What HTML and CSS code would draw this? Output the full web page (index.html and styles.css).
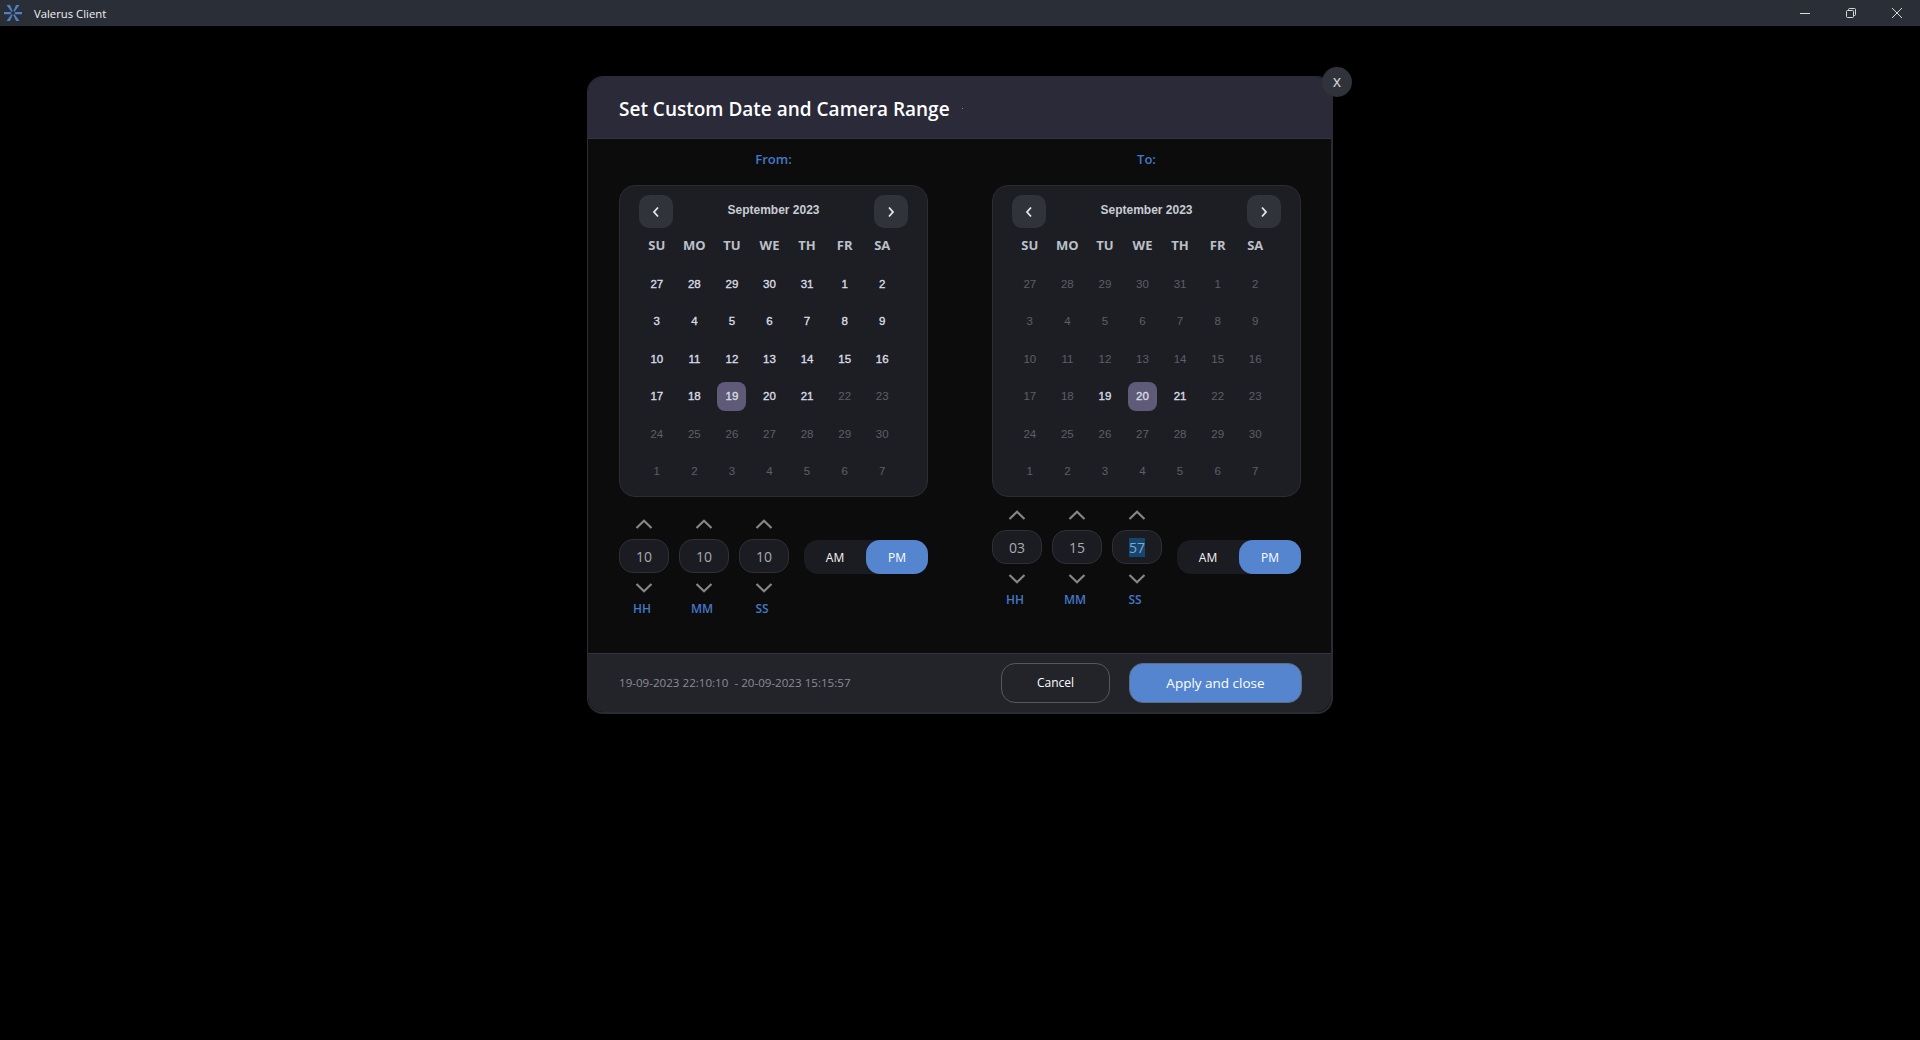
FILE: index.html
```html
<!DOCTYPE html>
<html lang="en">
<head>
  <meta charset="UTF-8" />
  <meta name="viewport" content="width=device-width, initial-scale=1.0" />
  <title>Valerus Client</title>
  <link rel="stylesheet" href="styles.css">
</head>
<body>
  <header class="titlebar">
    <svg class="app-logo" width="18" height="16" viewBox="0 0 18 16" fill="#4f7fc4">
      <path d="M2.5 0 L6 0 L8.6 6 L7.6 7 Z"/>
      <path d="M15.5 0 L12 0 L9.4 6 L10.4 7 Z"/>
      <path d="M0 7 L6.5 7 L7.5 8 L6.5 9.2 L0 9.2 Z"/>
      <path d="M18 7 L11.5 7 L10.5 8 L11.5 9.2 L18 9.2 Z"/>
      <path d="M2.5 16 L6 16 L8.6 10 L7.6 9 Z"/>
      <path d="M15.5 16 L12 16 L9.4 10 L10.4 9 Z"/>
    </svg>
    <span class="app-name">Valerus Client</span>
    <div class="window-btns">
      <svg width="10" height="10" viewBox="0 0 10 10"><path d="M0 5.5H10" stroke="#d8d8d8"/></svg>
      <svg width="10" height="10" viewBox="0 0 10 10" fill="none" stroke="#d8d8d8"><rect x="0.5" y="2.5" width="7" height="7" rx="1"/><path d="M2.5 2.5V1.5a1 1 0 0 1 1-1h5a1 1 0 0 1 1 1v5a1 1 0 0 1-1 1h-1"/></svg>
      <svg width="10" height="10" viewBox="0 0 10 10"><path d="M0 0L10 10M10 0L0 10" stroke="#d8d8d8"/></svg>
    </div>
  </header>

  <main class="stage">
    <section class="modal">
      <button class="close-btn">x</button>
      <div class="modal-header">
        <h1>Set Custom Date and Camera Range</h1>
        <span class="header-dot"></span>
      </div>

      <div class="modal-body">
        <div class="range-col">
          <div class="range-label">From:</div>
          <div class="calendar">
            <div class="cal-head">
              <button class="nav-btn"><svg width="10" height="12" viewBox="0 0 10 12"><path d="M7 1.5L3 6L7 10.5" /></svg></button>
              <span class="cal-month">September 2023</span>
              <button class="nav-btn"><svg width="10" height="12" viewBox="0 0 10 12"><path d="M3 1.5L7 6L3 10.5" /></svg></button>
            </div>
            <div class="cal-grid">
              <span class="dow">SU</span><span class="dow">MO</span><span class="dow">TU</span><span class="dow">WE</span><span class="dow">TH</span><span class="dow">FR</span><span class="dow">SA</span>
              <span class="day">27</span><span class="day">28</span><span class="day">29</span><span class="day">30</span><span class="day">31</span><span class="day">1</span><span class="day">2</span>
              <span class="day">3</span><span class="day">4</span><span class="day">5</span><span class="day">6</span><span class="day">7</span><span class="day">8</span><span class="day">9</span>
              <span class="day">10</span><span class="day">11</span><span class="day">12</span><span class="day">13</span><span class="day">14</span><span class="day">15</span><span class="day">16</span>
              <span class="day">17</span><span class="day">18</span><span class="day selected"><b>19</b></span><span class="day">20</span><span class="day">21</span><span class="day off">22</span><span class="day off">23</span>
              <span class="day off">24</span><span class="day off">25</span><span class="day off">26</span><span class="day off">27</span><span class="day off">28</span><span class="day off">29</span><span class="day off">30</span>
              <span class="day off">1</span><span class="day off">2</span><span class="day off">3</span><span class="day off">4</span><span class="day off">5</span><span class="day off">6</span><span class="day off">7</span>
            </div>
          </div>
          <div class="time-row">
            <div class="stepper">
              <div class="step"><svg class="chev" viewBox="0 0 18 10"><path d="M1.5 9L9 1.8L16.5 9"/></svg><div class="pill">10</div><svg class="chev" viewBox="0 0 18 10"><path d="M1.5 1L9 8.2L16.5 1"/></svg><span class="unit">HH</span></div>
              <div class="step"><svg class="chev" viewBox="0 0 18 10"><path d="M1.5 9L9 1.8L16.5 9"/></svg><div class="pill">10</div><svg class="chev" viewBox="0 0 18 10"><path d="M1.5 1L9 8.2L16.5 1"/></svg><span class="unit">MM</span></div>
              <div class="step"><svg class="chev" viewBox="0 0 18 10"><path d="M1.5 9L9 1.8L16.5 9"/></svg><div class="pill">10</div><svg class="chev" viewBox="0 0 18 10"><path d="M1.5 1L9 8.2L16.5 1"/></svg><span class="unit">SS</span></div>
            </div>
            <div class="ampm"><span>AM</span><span class="active">PM</span></div>
          </div>
        </div>

        <div class="range-col">
          <div class="range-label">To:</div>
          <div class="calendar">
            <div class="cal-head">
              <button class="nav-btn"><svg width="10" height="12" viewBox="0 0 10 12"><path d="M7 1.5L3 6L7 10.5" /></svg></button>
              <span class="cal-month">September 2023</span>
              <button class="nav-btn"><svg width="10" height="12" viewBox="0 0 10 12"><path d="M3 1.5L7 6L3 10.5" /></svg></button>
            </div>
            <div class="cal-grid">
              <span class="dow">SU</span><span class="dow">MO</span><span class="dow">TU</span><span class="dow">WE</span><span class="dow">TH</span><span class="dow">FR</span><span class="dow">SA</span>
              <span class="day off">27</span><span class="day off">28</span><span class="day off">29</span><span class="day off">30</span><span class="day off">31</span><span class="day off">1</span><span class="day off">2</span>
              <span class="day off">3</span><span class="day off">4</span><span class="day off">5</span><span class="day off">6</span><span class="day off">7</span><span class="day off">8</span><span class="day off">9</span>
              <span class="day off">10</span><span class="day off">11</span><span class="day off">12</span><span class="day off">13</span><span class="day off">14</span><span class="day off">15</span><span class="day off">16</span>
              <span class="day off">17</span><span class="day off">18</span><span class="day">19</span><span class="day selected"><b>20</b></span><span class="day">21</span><span class="day off">22</span><span class="day off">23</span>
              <span class="day off">24</span><span class="day off">25</span><span class="day off">26</span><span class="day off">27</span><span class="day off">28</span><span class="day off">29</span><span class="day off">30</span>
              <span class="day off">1</span><span class="day off">2</span><span class="day off">3</span><span class="day off">4</span><span class="day off">5</span><span class="day off">6</span><span class="day off">7</span>
            </div>
          </div>
          <div class="time-row raised">
            <div class="stepper">
              <div class="step"><svg class="chev" viewBox="0 0 18 10"><path d="M1.5 9L9 1.8L16.5 9"/></svg><div class="pill">03</div><svg class="chev" viewBox="0 0 18 10"><path d="M1.5 1L9 8.2L16.5 1"/></svg><span class="unit">HH</span></div>
              <div class="step"><svg class="chev" viewBox="0 0 18 10"><path d="M1.5 9L9 1.8L16.5 9"/></svg><div class="pill">15</div><svg class="chev" viewBox="0 0 18 10"><path d="M1.5 1L9 8.2L16.5 1"/></svg><span class="unit">MM</span></div>
              <div class="step"><svg class="chev" viewBox="0 0 18 10"><path d="M1.5 9L9 1.8L16.5 9"/></svg><div class="pill"><span class="sel-text">57</span></div><svg class="chev" viewBox="0 0 18 10"><path d="M1.5 1L9 8.2L16.5 1"/></svg><span class="unit">SS</span></div>
            </div>
            <div class="ampm"><span>AM</span><span class="active">PM</span></div>
          </div>
        </div>
      </div>

      <div class="modal-footer">
        <span class="range-text">19-09-2023 22:10:10&nbsp; - 20-09-2023 15:15:57</span>
        <button class="btn cancel">Cancel</button>
        <button class="btn apply">Apply and close</button>
      </div>
    </section>
  </main>
</body>
</html>
```

FILE: styles.css
```css
* {
  box-sizing: border-box;
}
html, body {
  height: 100%;
}
body {
  margin: 0;
  background: #000;
  color: #fff;
  font-family: "Open Sans", sans-serif;
  overflow: hidden;
}
button {
  font-family: inherit;
  cursor: pointer;
}

.titlebar {
  height: 26px;
  background: #2a2e37;
  display: flex;
  align-items: center;
  padding-left: 4px;
}
.app-logo {
  flex: none;
}
.app-name {
  margin-left: 12px;
  font-size: 11.3px;
  color: #f2f2f2;
}
.window-btns {
  margin-left: auto;
  display: flex;
  gap: 36px;
  padding-right: 18px;
}

.stage {
  padding: 50px 0 0 587px;
}
.modal {
  position: relative;
  width: 746px;
  height: 638px;
  display: flex;
  flex-direction: column;
  background: #0c0c0d;
  border: 1px solid #2b2c33;
  border-width: 1px 2px 2px 1px;
  border-radius: 16px;
}
.close-btn {
  position: absolute;
  top: -10px;
  right: -21px;
  width: 30px;
  height: 30px;
  padding: 0 0 3px;
  border: 0;
  border-radius: 50%;
  background: #30333a;
  color: #d4d4d4;
  font-size: 16px;
}
.modal-header {
  height: 62px;
  flex: none;
  display: flex;
  align-items: center;
  padding: 2px 0 0 31px;
  background: #2a2a39;
  border-bottom: 1px solid #34353d;
  border-radius: 15px 15px 0 0;
}
.modal-header h1 {
  margin: 0;
  font-size: 19px;
  font-weight: 600;
  color: #fff;
}
.header-dot {
  width: 1px;
  height: 1px;
  margin-left: 12px;
  background: #4f8fe0;
}

.modal-body {
  flex: 1;
  display: flex;
  gap: 64px;
  padding-left: 31px;
}
.range-col {
  width: 309px;
  flex: none;
}
.range-label {
  height: 46px;
  padding-top: 11px;
  text-align: center;
  font-size: 13px;
  font-weight: 600;
  color: #4478c8;
}

.calendar {
  height: 312px;
  padding: 9px 19px 0;
  background: #1d1e24;
  border: 1px solid #2c2d33;
  border-radius: 16px;
}
.cal-head {
  display: flex;
  align-items: center;
  justify-content: space-between;
  height: 33px;
}
.nav-btn {
  width: 34px;
  height: 33px;
  padding: 0;
  display: flex;
  align-items: center;
  justify-content: center;
  border: 0;
  border-radius: 10px;
  background: #31333a;
}
.nav-btn svg {
  fill: none;
  stroke: #e8e8e8;
  stroke-width: 1.8;
}
.cal-month {
  margin-top: -4px;
  font-family: "Liberation Sans", sans-serif;
  font-size: 12px;
  font-weight: bold;
  color: #c9ccd3;
}
.cal-grid {
  width: 263px;
  margin-left: -1px;
  display: grid;
  grid-template-columns: repeat(7, 1fr);
  grid-template-rows: 37px repeat(6, 37.5px);
}
.dow, .day {
  display: flex;
  align-items: center;
  justify-content: center;
}
.dow {
  padding-bottom: 3px;
  font-size: 13px;
  font-weight: 700;
  color: #bcc0c9;
}
.day {
  font-family: "Liberation Sans", sans-serif;
  font-size: 11.5px;
  font-weight: normal;
  color: #d9dde4;
  -webkit-text-stroke: 0.35px #d9dde4;
}
.day.off {
  color: #5e5f65;
  -webkit-text-stroke: 0;
}
.day.selected b {
  width: 29px;
  height: 29px;
  display: flex;
  align-items: center;
  justify-content: center;
  border-radius: 8px;
  background: #5f5a78;
  font-weight: normal;
}

.time-row {
  display: flex;
  margin-top: 22px;
  position: relative;
}
.time-row.raised {
  margin-top: 13px;
}
.stepper {
  display: flex;
  gap: 10px;
}
.step {
  width: 50px;
  display: flex;
  flex-direction: column;
  align-items: center;
}
.chev {
  width: 18px;
  height: 10px;
  fill: none;
  stroke: #85868a;
  stroke-width: 2.2;
}
.pill {
  width: 50px;
  height: 34px;
  margin: 10px 0;
  display: flex;
  align-items: center;
  justify-content: center;
  background: #1b1c21;
  border: 1px solid #2f3036;
  border-radius: 14px;
  font-size: 14px;
  color: #a9abb0;
}
.sel-text {
  background: #16456f;
  color: #7fa9cf;
}
.unit {
  margin: 7px 4px 0 0;
  font-size: 12px;
  font-weight: 600;
  color: #4478c8;
}
.ampm {
  position: absolute;
  top: 21px;
  right: 0;
  width: 124px;
  height: 34px;
  display: grid;
  grid-template-columns: 62px 62px;
  align-items: center;
  justify-items: center;
  background: #1b1c21;
  border-radius: 14px;
  font-size: 12px;
  font-weight: 500;
  color: #f5f5f5;
}
.time-row.raised .ampm {
  top: 30px;
}
.ampm span {
  width: 100%;
  height: 100%;
  display: flex;
  align-items: center;
  justify-content: center;
  border-radius: 14px;
}
.ampm .active {
  background: #5585cf;
  color: #fff;
}

.modal-footer {
  height: 59px;
  flex: none;
  display: flex;
  align-items: center;
  padding: 0 29px 0 31px;
  background: #22242a;
  border-top: 1px solid #34353b;
  border-radius: 0 0 15px 15px;
}
.range-text {
  margin: -2px auto 0 0;
  font-size: 11.6px;
  color: #8b8d92;
}
.btn {
  height: 40px;
  margin-top: -1px;
  border-radius: 14px;
  color: #fff;
}
.cancel {
  width: 109px;
  margin-right: 19px;
  background: transparent;
  border: 1px solid #55575c;
  font-size: 12px;
}
.apply {
  width: 173px;
  background: #5585cf;
  border: 1px solid #5d6b84;
  font-size: 13.5px;
}
```
